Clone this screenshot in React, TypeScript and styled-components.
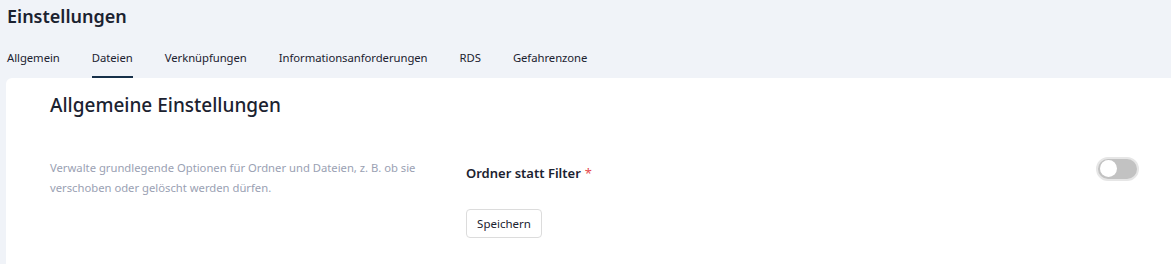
import React, { useState } from "react";
import styled, { createGlobalStyle } from "styled-components";

const Global = createGlobalStyle`
  html, body { margin: 0; padding: 0; background: #f0f3f8; }
  body { font-family: "Noto Sans", "Open Sans", sans-serif; color: #1b2230; }
  * { box-sizing: border-box; }
`;

const Page = styled.div`
  width: 1171px;
  height: 264px;
  overflow: hidden;
  background: #f0f3f8;
  display: flex;
  flex-direction: column;
`;

const Title = styled.h1`
  margin: 0;
  padding: 3px 0 0 7px;
  font-size: 18px;
  line-height: 27px;
  font-weight: 600;
  color: #1b2230;
`;

const Tabs = styled.nav`
  display: flex;
  gap: 32px;
  padding: 16px 0 0 7px;
  height: 75px;
  margin-top: -27px;
  padding-top: 43px;
`;

const Tab = styled.div<{ $active?: boolean }>`
  font-size: 11.3px;
  letter-spacing: -0.05px;
  line-height: 17px;
  color: #1b2230;
  height: 32px;
  padding-top: 3px;
  border-bottom: 2px solid ${(p) => (p.$active ? "#163049" : "transparent")};
  cursor: pointer;
`;

const Card = styled.section`
  margin-left: 6px;
  flex: 1;
  background: #ffffff;
  border-top-left-radius: 6px;
  padding: 14px 32px 0 44px;
`;

const Heading = styled.h2`
  margin: 0;
  font-size: 19px;
  line-height: 26px;
  font-weight: 500;
  color: #1b2230;
`;

const Row = styled.div`
  display: grid;
  grid-template-columns: 416px 1fr;
  margin-top: 40px;
`;

const Description = styled.p`
  margin: 0;
  font-size: 11.25px;
  line-height: 20px;
  color: #9aa1b3;
  width: 380px;
`;

const Form = styled.div`
  display: flex;
  flex-direction: column;
`;

const FieldRow = styled.div`
  display: flex;
  align-items: center;
  justify-content: space-between;
  height: 24px;
`;

const Label = styled.label`
  font-size: 13px;
  font-weight: 600;
  color: #1b2230;
  padding-top: 6px;
`;

const Required = styled.span`
  color: #e5484d;
  margin-left: 4px;
  font-weight: 400;
`;

const Toggle = styled.button<{ $on: boolean }>`
  width: 43px;
  height: 24px;
  border-radius: 12px;
  border: 2px solid #e6e6e6;
  background: ${(p) => (p.$on ? "#163049" : "#c2c2c2")};
  padding: 1.5px;
  display: flex;
  align-items: center;
  justify-content: ${(p) => (p.$on ? "flex-end" : "flex-start")};
  cursor: pointer;
  margin-top: -3px;
`;

const Knob = styled.span`
  width: 17px;
  height: 17px;
  border-radius: 50%;
  background: #ffffff;
`;

const SaveButton = styled.button`
  align-self: flex-start;
  margin-top: 27px;
  width: 76px;
  height: 29px;
  border: 1px solid #dcdcdc;
  border-radius: 4px;
  background: #ffffff;
  font-family: inherit;
  font-size: 11.5px;
  color: #1b2230;
  cursor: pointer;
`;

export default function App() {
  const [on, setOn] = useState(false);
  const tabs = ["Allgemein", "Dateien", "Verknüpfungen", "Informationsanforderungen", "RDS", "Gefahrenzone"];
  return (
    <Page>
      <Global />
      <Title>Einstellungen</Title>
      <Tabs>
        {tabs.map((t) => (
          <Tab key={t} $active={t === "Dateien"}>{t}</Tab>
        ))}
      </Tabs>
      <Card>
        <Heading>Allgemeine Einstellungen</Heading>
        <Row>
          <Description>
            Verwalte grundlegende Optionen für Ordner und Dateien, z. B. ob sie verschoben oder gelöscht werden dürfen.
          </Description>
          <Form>
            <FieldRow>
              <Label>
                Ordner statt Filter<Required>*</Required>
              </Label>
              <Toggle $on={on} onClick={() => setOn(!on)} aria-label="Ordner statt Filter">
                <Knob />
              </Toggle>
            </FieldRow>
            <SaveButton>Speichern</SaveButton>
          </Form>
        </Row>
      </Card>
    </Page>
  );
}
